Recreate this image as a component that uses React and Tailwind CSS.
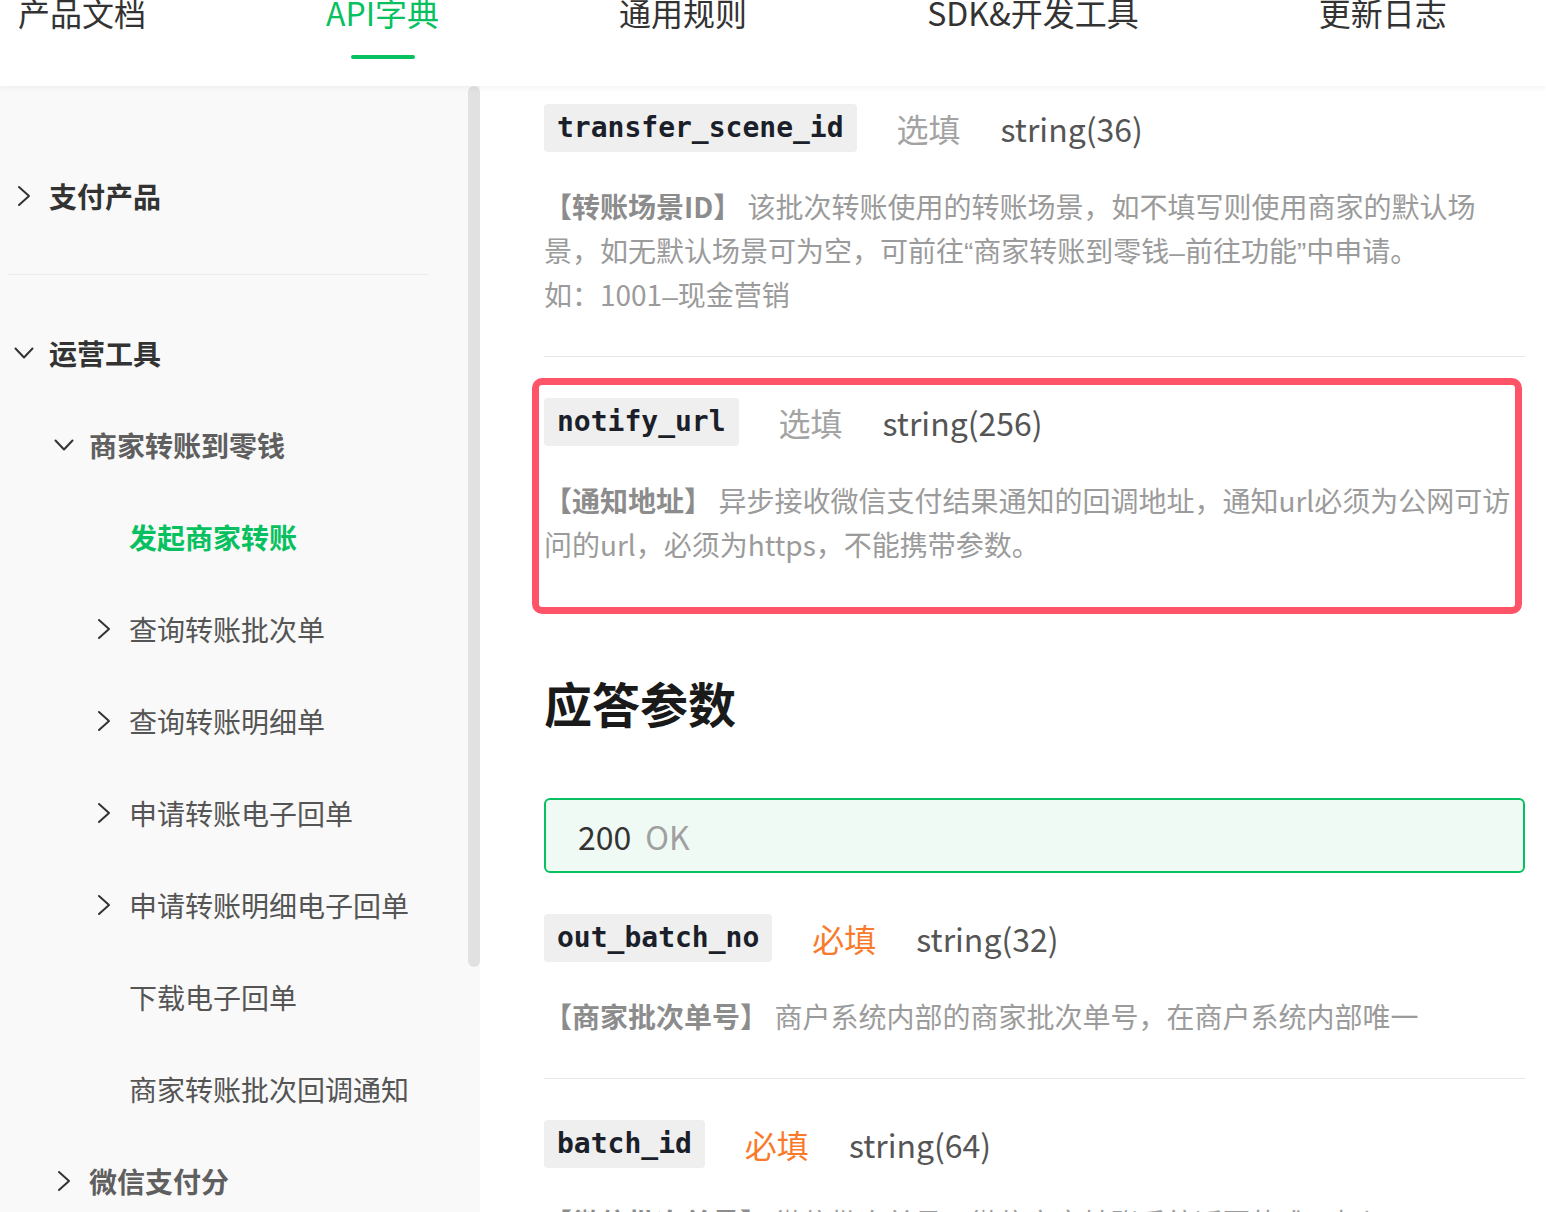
const navItems = ["产品文档", "API字典", "通用规则", "SDK&开发工具", "更新日志"];

function ChevronRight() {
  return (
    <svg width="14" height="22" viewBox="0 0 14 22" fill="none">
      <polyline points="2,2 12,11 2,20" stroke="#333" strokeWidth="2" strokeLinecap="round" strokeLinejoin="round" />
    </svg>
  );
}

function ChevronDown() {
  return (
    <svg width="20" height="12" viewBox="0 0 20 12" fill="none">
      <polyline points="1.5,1.5 10,10.5 18.5,1.5" stroke="#333" strokeWidth="2" strokeLinecap="round" strokeLinejoin="round" />
    </svg>
  );
}

function NavRow({ level, icon, tone, children }) {
  const indent = ["pl-[14px]", "pl-[54px]", "pl-[94px]"][level];
  const text = {
    head: "font-bold text-[#333]",
    sub: "font-bold text-[#5f5f5f]",
    active: "font-bold text-[#07c160]",
    item: "text-[#555]",
  }[tone];
  return (
    <div className={`flex items-center h-[92px] ${indent}`}>
      <div className="w-[20px] flex items-center justify-center shrink-0">
        {icon === "right" && <ChevronRight />}
        {icon === "down" && <ChevronDown />}
      </div>
      <span className={`ml-[15px] text-[28px] leading-none whitespace-nowrap ${text}`}>{children}</span>
    </div>
  );
}

function Sidebar() {
  return (
    <aside className="w-[480px] shrink-0 bg-[#f9f9f9] flex">
      <div className="w-[468px] pt-[64px]">
        <NavRow level={0} icon="right" tone="head">支付产品</NavRow>
        <div className="my-[32px] ml-[8px] w-[420px] h-px bg-[#ececec]" />
        <NavRow level={0} icon="down" tone="head">运营工具</NavRow>
        <NavRow level={1} icon="down" tone="sub">商家转账到零钱</NavRow>
        <NavRow level={2} tone="active">发起商家转账</NavRow>
        <NavRow level={2} icon="right" tone="item">查询转账批次单</NavRow>
        <NavRow level={2} icon="right" tone="item">查询转账明细单</NavRow>
        <NavRow level={2} icon="right" tone="item">申请转账电子回单</NavRow>
        <NavRow level={2} icon="right" tone="item">申请转账明细电子回单</NavRow>
        <NavRow level={2} tone="item">下载电子回单</NavRow>
        <NavRow level={2} tone="item">商家转账批次回调通知</NavRow>
        <NavRow level={1} icon="right" tone="sub">微信支付分</NavRow>
      </div>
      <div className="w-[12px]">
        <div className="h-[881px] rounded-full bg-[#e1e1e1]" />
      </div>
    </aside>
  );
}

function ParamHead({ name, required, type }) {
  return (
    <div className="flex items-center gap-[40px] h-[48px]">
      <code className="h-[48px] px-[13px] flex items-center rounded-[4px] bg-[#efefef] font-['DejaVu_Sans_Mono',monospace] font-bold text-[28px] text-[#1b1f2a]">
        {name}
      </code>
      <span className={`text-[32px] ${required ? "text-[#fa7a2c]" : "text-[#a3a3a3]"}`}>
        {required ? "必填" : "选填"}
      </span>
      <span className="text-[32px] text-[#555]">{type}</span>
    </div>
  );
}

function ParamDesc({ label, lines }) {
  return (
    <div className="mt-[32px] text-[28px] leading-[44px] text-[#9b9b9b] whitespace-nowrap">
      {lines.map((l, i) => (
        <div key={i} className="h-[44px]">
          {i === 0 && <span className="font-bold text-[#8c8c8c]">【{label}】 </span>}
          {l}
        </div>
      ))}
    </div>
  );
}

const latin = "font-['Liberation_Sans',sans-serif] leading-none";

export default function App() {
  return (
    <div className="w-[1546px] h-[1212px] overflow-hidden bg-white flex flex-col font-['Noto_Sans_CJK_SC','Noto_Sans',sans-serif]">
      <header className="h-[86px] shrink-0 bg-white relative z-10 shadow-[0_2px_6px_rgba(0,0,0,0.05)]">
        <nav className="flex gap-[180px] pl-[18px] -mt-[4px]">
          {navItems.map((n) => (
            <div key={n} className="relative">
              <span className={`text-[32px] leading-[32px] whitespace-nowrap ${n === "API字典" ? "text-[#07c160]" : "text-[#333]"}`}>
                {n}
              </span>
              {n === "API字典" && (
                <div className="absolute left-1/2 -translate-x-1/2 top-[59px] w-[64px] h-[4px] rounded-full bg-[#07c160]" />
              )}
            </div>
          ))}
        </nav>
      </header>

      <div className="flex flex-1 min-h-0">
        <Sidebar />

        <main className="flex-1 pl-[64px] pr-[21px] pt-[18px]">
          <div className="pb-[40px] border-b border-[#e6e6e6]">
            <ParamHead name="transfer_scene_id" type="string(36)" />
            <ParamDesc
              label="转账场景ID"
              lines={[
                "该批次转账使用的转账场景，如不填写则使用商家的默认场",
                <>
                  景，如无默认场景可为空，可前往<span className={latin}>“</span>商家转账到零钱<span className={latin}>–</span>前往功能<span className={latin}>”</span>中申请。
                </>,
                <>
                  如：1001<span className={latin}>–</span>现金营销
                </>,
              ]}
            />
          </div>

          <div className="mt-[21px] -ml-[12px] mr-[3px] border-[7px] border-[#ff5468] rounded-[10px] pl-[5px] pt-[13px] pb-[41px]">
            <ParamHead name="notify_url" type="string(256)" />
            <ParamDesc
              label="通知地址"
              lines={[
                "异步接收微信支付结果通知的回调地址，通知url必须为公网可访",
                "问的url，必须为https，不能携带参数。",
              ]}
            />
          </div>

          <h2 className="mt-[59px] text-[48px] leading-[58px] font-bold text-[#1a1a1a]">应答参数</h2>

          <div className="mt-[67px] h-[75px] rounded-[6px] border-2 border-[#07c160] bg-[#f0faf4] flex items-center pl-[32px] text-[32px]">
            <span className="text-[#333]">200</span>
            <span className="ml-[14px] text-[#a0a0a0]">OK</span>
          </div>

          <div className="mt-[41px] pb-[40px] border-b border-[#e6e6e6]">
            <ParamHead name="out_batch_no" required type="string(32)" />
            <ParamDesc label="商家批次单号" lines={["商户系统内部的商家批次单号，在商户系统内部唯一"]} />
          </div>

          <div className="pt-[41px]">
            <ParamHead name="batch_id" required type="string(64)" />
            <ParamDesc label="微信批次单号" lines={["微信批次单号，微信商家转账系统返回的唯一标识"]} />
          </div>
        </main>
      </div>
    </div>
  );
}
